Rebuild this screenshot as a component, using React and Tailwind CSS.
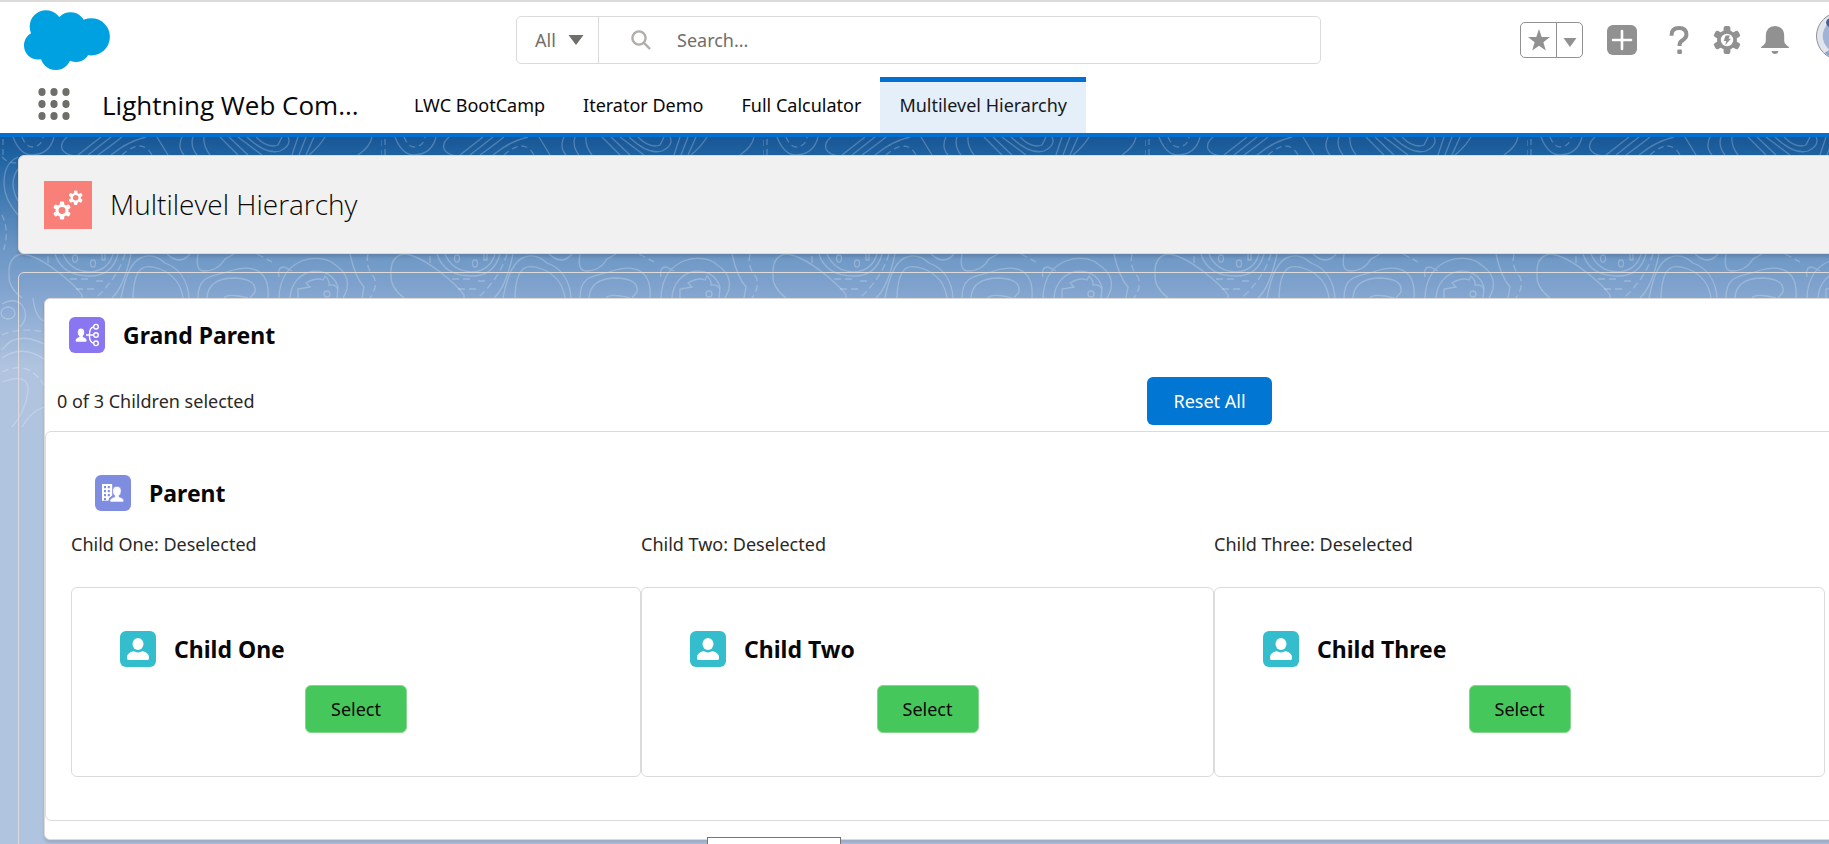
import React from 'react';

const CHILDREN = ['Child One', 'Child Two', 'Child Three'];
const TABS = ['LWC BootCamp', 'Iterator Demo', 'Full Calculator', 'Multilevel Hierarchy'];

function CloudLogo() {
  return (
    <svg viewBox="0 0 86 60" className="h-[60px] w-[86px]" fill="#00a1e0" role="img" aria-label="Salesforce">
      <circle cx="22" cy="16.5" r="16.3" />
      <circle cx="46.5" cy="17.5" r="15.3" />
      <circle cx="67.3" cy="26.8" r="18.6" />
      <circle cx="14" cy="35.5" r="14" />
      <circle cx="31.8" cy="44.5" r="15.5" />
      <circle cx="52" cy="38" r="14" />
      <path d="M10 24 L30 10 L60 16 L66 40 L50 46 L20 46 Z" />
    </svg>
  );
}

function Waffle() {
  const steps = [4, 16, 28];
  return (
    <svg viewBox="0 0 32 32" className="h-8 w-8" fill="#706e6b" aria-hidden="true">
      {steps.map((y) => steps.map((x) => <ellipse key={x + '-' + y} cx={x} cy={y} rx="3.6" ry="4" />))}
    </svg>
  );
}

function Cog({ x, y, r, hole, fill, holeFill }) {
  return (
    <g transform={`translate(${x} ${y}) scale(${r / 14})`}>
      <circle r="10" fill={fill} />
      {[0, 60, 120].map((a) => (
        <rect key={a} x="-3.4" y="-14" width="6.8" height="28" rx="2" fill={fill} transform={`rotate(${a})`} />
      ))}
      <circle r={hole} fill={holeFill} />
    </g>
  );
}

function PersonIcon() {
  return (
    <svg viewBox="0 0 36 36" className="h-9 w-9 rounded-md bg-[#34becd]" fill="#fff" aria-hidden="true">
      <ellipse cx="18" cy="13" rx="5.5" ry="6" />
      <path d="M7 26 Q7 22.3 13 20.3 Q14.2 20 15.2 20.7 Q18 22.3 20.8 20.7 Q21.8 20 23 20.3 Q29 22.3 29 26 V27.4 Q29 29 27.2 29 H8.8 Q7 29 7 27.4 Z" />
    </svg>
  );
}

function HierarchyIcon() {
  return (
    <svg viewBox="0 0 36 36" className="h-9 w-9 rounded-md bg-[#8a76f0]" fill="#fff" aria-hidden="true">
      <ellipse cx="12" cy="15.3" rx="3.2" ry="3.9" />
      <path d="M10.4 18 H13.8 V20 Q17.6 21.2 17.6 23.6 Q17.6 24.8 16.4 24.8 H7.8 Q6.6 24.8 6.6 23.6 Q6.6 21.2 10.4 20 Z" />
      <g fill="none" stroke="#fff" strokeWidth="1.4">
        <circle cx="27" cy="9.7" r="2.3" />
        <circle cx="27" cy="18" r="2.3" />
        <circle cx="27" cy="26.3" r="2.3" />
        <path d="M17 18 H24.6 M24.7 9.7 Q20.4 10.5 20.4 18 Q20.4 25.5 24.7 26.3" />
      </g>
    </svg>
  );
}

function AccountIcon() {
  return (
    <svg viewBox="0 0 36 36" className="h-9 w-9 rounded-md bg-[#7f8de1]" fill="#fff" aria-hidden="true">
      <path d="M7 9 H17.2 V20.4 Q14 22 13.4 25.7 H7 Z" />
      <g fill="#7f8de1">
        {[11, 15, 19].map((y) => (
          <React.Fragment key={y}>
            <rect x="9" y={y} width="2" height="2.2" />
            <rect x="12.8" y={y} width="2" height="2.2" />
          </React.Fragment>
        ))}
        <rect x="9" y="23" width="2" height="2.2" />
      </g>
      <path
        d="M22 11.3 Q26.2 11.6 26.2 16 Q26.2 19.4 24 20.8 V21.8 Q28.8 23.2 28.8 25.8 Q28.8 27 27.6 27 H16 Q14.8 27 14.8 25.8 Q14.8 23.2 19.8 21.8 V20.8 Q17.6 19.4 17.6 16 Q17.6 11.6 22 11.3 Z"
        stroke="#7f8de1"
        strokeWidth="0.6"
      />
    </svg>
  );
}

function Backdrop() {
  return (
    <svg className="absolute inset-x-0 top-0 h-[292px] w-full" aria-hidden="true">
      <defs>
        <pattern id="contours" width="382" height="292" patternUnits="userSpaceOnUse">
          <g fill="none" stroke="#fff" strokeOpacity="0.23" strokeWidth="1.3">
            <path d="M13 0 Q20 18 32 18 Q50 17 54 0 M67 0 Q60 6 62 12 Q65 18 75 19 M78 18 L101 0 M88 18 L111 0 M98 18 Q112 8 122 0 M111 18 Q128 4 146 0" />
            <path d="M157 0 L168 18 M182 0 Q177 10 184 18 M193 0 Q190 9 197 18 M204 0 Q203 9 210 18 M220 0 L238 18 M229 0 L248 18 M238 0 L262 18 M247 0 Q266 18 280 14 Q292 8 288 0 M256 0 Q268 12 278 8 L282 0 M298 0 L292 18 M306 0 L299 18 M314 0 L306 18 M325 0 Q319 10 309 18 M372 0 Q370 10 358 18" />
            <path d="M22 0 Q26 10 32 10 Q42 9 43 0 M3 2 V18 M122 18 Q142 0 152 18 M382 3 V18" strokeDasharray="6 4" />
            <path d="M18 20 Q4 26 4 46 Q4 62 18 78 M18 32 Q8 46 18 64" />
            <path d="M2 20 Q10 28 18 25 M2 78 Q10 95 3 115" strokeDasharray="6 4" />
            <path d="M55 117 Q62 139 90 139 Q112 139 118 117 M63 117 Q70 134 90 135 Q108 134 113 117 M102 117 V123 H105 V117" />
            <ellipse cx="75" cy="121.500" rx="2.5" ry="3.500" />
            <ellipse cx="93" cy="126.500" rx="2.500" ry="3.500" />
            <path d="M22 161 Q8 150 9 138 Q8 119 22 117 Q36 118 58 135 Q76 149 82 158 V161" />
            <path d="M70 142 H92 M96 144 H106 M76 152 H94 M125 117 Q118 140 97 160 M48 119 V128" strokeDasharray="7 4" />
            <path d="M131 117 Q124 150 112 161 M121 161 Q128 124 143 120 Q154 116 165 126 Q187 134 189 161 M133 161 C134 124 148 128 160 132 Q180 140 183 161 M167 117 Q180 129 190 117" />
            <path d="M198 117 Q195 134 204 134 Q218 134 225 122 L234 117 M198 161 C198 136 215 140 230 134 C255 126 270 135 268 161 M207 161 Q208 141 235 141 Q257 142 255 155 L250 161 M224 161 Q228 156 248 161" />
            <path d="M279 161 C280 118 322 116 334 127 C350 137 350 150 343 161 M290 161 C292 130 330 125 338 150 L337 161 M298 161 V152 L310 150 L306 146 Q316 140 323 143 L325 139 Q330 144 329 148 Q338 147 338 155 M279 140 Q277 130 284 130 L292 134 M350 117 Q355 140 364 150 L362 161" />
            <circle cx="327" cy="157" r="3" />
            <path d="M257 117 L272 125 M368 117 Q365 130 374 140 Q378 150 370 161" strokeDasharray="7 4" />
            <ellipse cx="8" cy="176" rx="7" ry="6" />
            <path d="M2 167 Q14 160 22 168 Q30 180 20 190 M33 161 Q35 180 44 184 M2 213 Q16 193 44 207 M2 221 Q22 207 44 222 M2 245 Q30 235 28 255 Q25 275 12 290 M44 270 Q30 275 22 290" />
            <path d="M2 198 Q20 190 44 195 M2 235 Q28 222 44 248" strokeDasharray="7 4" />
          </g>
        </pattern>
      </defs>
      <rect width="100%" height="100%" fill="url(#contours)" />
    </svg>
  );
}

function Header() {
  return (
    <header className="border-t-2 border-b-4 border-t-[#dddbda] border-b-[#0070d2] bg-white">
      <div className="flex h-[75px] items-start pt-2 pr-8 pl-6">
        <div className="w-[492px] shrink-0">
          <CloudLogo />
        </div>
        <form className="mt-1.5 flex h-12 w-[805px] rounded-[5px] border border-[#dddbda] bg-white text-lg text-[#706e6b]">
          <button type="button" className="flex w-[82px] items-center gap-3 border-r border-[#dddbda] pl-[18px]">
            All
            <svg viewBox="0 0 16 10" className="h-2.5 w-4 shrink-0" fill="#706e6b" aria-hidden="true">
              <path d="M0.500 0 H15.500 L8 10 Z" />
            </svg>
          </button>
          <label htmlFor="search" className="flex items-center pl-8">
            <svg viewBox="0 0 20 20" className="h-5 w-5" fill="none" stroke="#b0adab" strokeWidth="2.400" aria-label="Search">
              <circle cx="8" cy="8" r="6.600" />
              <path d="M12.700 12.700 L19 19" />
            </svg>
          </label>
          <input
            id="search"
            type="text"
            placeholder="Search..."
            className="min-w-0 flex-1 bg-transparent pl-[26px] outline-none placeholder:text-[#706e6b]"
          />
        </form>
        <div className="ml-auto flex h-[60px] items-center">
          <div className="mr-6 flex h-9 w-[63px] rounded-[5px] border border-[#919191]">
            <button type="button" aria-label="Favorite" className="flex w-9 items-center justify-center border-r border-[#919191]">
              <svg viewBox="0 0 22 22" className="h-[22px] w-[22px]" fill="#919191">
                <path d="M11 0 L13.700 7.900 L22 8.100 L15.400 13.200 L17.800 21.500 L11 16.700 L4.200 21.500 L6.600 13.200 L0 8.100 L8.300 7.900 Z" />
              </svg>
            </button>
            <button type="button" aria-label="Favorites list" className="flex flex-1 items-center justify-center pt-1">
              <svg viewBox="0 0 14 9" className="h-[9px] w-3.5" fill="#919191">
                <path d="M0.500 0 H13.500 L7 9 Z" />
              </svg>
            </button>
          </div>
          <button type="button" aria-label="Create" className="mr-8">
            <svg viewBox="0 0 30 30" className="h-[30px] w-[30px] rounded-md bg-[#919191]" stroke="#fff" strokeWidth="2.600" strokeLinecap="round">
              <path d="M15 6 V24 M6 15 H24" />
            </svg>
          </button>
          <button type="button" aria-label="Help" className="mr-6">
            <svg viewBox="0 0 20 28" className="h-7 w-5" fill="none" stroke="#919191" strokeWidth="4">
              <path d="M2.600 9.800 V9 Q2.600 2 10.200 2 Q17.400 2 17.400 8.600 Q17.400 11.800 14 14 Q10.600 16 10.600 18.600 V20" />
              <rect x="8.300" y="23.500" width="4.600" height="4.500" rx="1" fill="#919191" stroke="none" />
            </svg>
          </button>
          <button type="button" aria-label="Setup" className="mr-5">
            <svg viewBox="0 0 28 28" className="h-7 w-7">
              <Cog x={14} y={14} r={14} hole={6.2} fill="#919191" holeFill="#fff" />
              <path d="M12.600 9.500 H17 L15.500 12.700 H18 L12.200 19 L13.300 14.900 H10.700 Z" fill="#919191" />
            </svg>
          </button>
          <button type="button" aria-label="Notifications" className="mr-[27px]">
            <svg viewBox="0 0 28 28" className="h-7 w-7" fill="#919191">
              <path d="M14 0 Q23.200 0.500 23.200 10 V15 Q23.200 17.500 25.500 19.300 Q28 20.500 28 21.500 Q28 22 27 22 H1 Q0 22 0 21.500 Q0 20.500 2.500 19.300 Q4.800 17.500 4.800 15 V10 Q4.800 0.500 14 0 Z M10.500 25 H17.500 Q17 28 14 28 Q11 28 10.500 25 Z" />
            </svg>
          </button>
          <button type="button" aria-label="Profile" className="-mt-2">
            <svg viewBox="0 0 48 48" className="h-12 w-12 rounded-full border border-[#919191] bg-[#e1e5ee]">
              <circle cx="24" cy="24" r="18" fill="#a0b3d4" />
              <circle cx="14" cy="10" r="4.500" fill="#3f5f96" />
              <circle cx="34" cy="10" r="4.500" fill="#3f5f96" />
              <ellipse cx="24" cy="26" rx="11.500" ry="10" fill="#3f5f96" />
              <path d="M6 44 Q10 37 24 37 Q38 37 42 44 L24 48 Z" fill="#8ea5cc" />
            </svg>
          </button>
        </div>
      </div>
      <div className="flex h-14 pl-[38px]">
        <button type="button" aria-label="App launcher" className="mt-[11px] h-8 w-8">
          <Waffle />
        </button>
        <div className="w-[325px] shrink-0 pl-8 font-['Open_Sans',sans-serif] text-[26px] leading-[56px] text-[#080707]">
          Lightning Web Com...
        </div>
        <nav className="flex">
          {TABS.map((tab, i) => (
            <a
              key={tab}
              href="#"
              className={
                i === TABS.length - 1
                  ? 'border-t-[5px] border-[#0070d2] bg-[#e5eff9] px-[19px] text-lg leading-[46px] text-[#16191d]'
                  : 'border-t-[5px] border-transparent px-[19px] text-lg leading-[46px] text-[#080707]'
              }
            >
              {tab}
            </a>
          ))}
        </nav>
      </div>
    </header>
  );
}

function ChildCard({ name }) {
  return (
    <section>
      <p className="leading-7">{name}: Deselected</p>
      <div className="mt-[29px] h-[190px] rounded-[6px] border border-[#dddbda] pt-[43px]">
        <h3 className="flex items-center gap-[18px] pl-12 text-[23px] leading-9 font-bold text-[#080707]">
          <PersonIcon />
          {name}
        </h3>
        <div className="mt-[18px] flex justify-center">
          <button
            type="button"
            className="h-12 w-[102px] rounded-[6px] border border-[#84d68c] bg-[#46c75b] text-lg text-[#080707]"
          >
            Select
          </button>
        </div>
      </div>
    </section>
  );
}

export default function App() {
  return (
    <div className="relative h-screen overflow-hidden bg-[#b0c4df] font-['Noto_Sans','Open_Sans',sans-serif] text-lg text-[#2b2826]">
      <div className="-mr-[67px] flex h-full flex-col">
        <Header />
        <main className="relative flex-1 bg-[linear-gradient(to_bottom,#195695_0px,#1f63a3_20px,#6a95c4_110px,#88a8d1_165px,#b0c4df_230px)] px-[18px] pt-[18px]">
          <Backdrop />
          <div className="relative flex h-[99px] items-center gap-[18px] rounded-[6px] border border-[#dddbda] bg-[#f2f1f1] pl-[25px] shadow-[0_3px_3px_rgba(0,0,0,0.12)]">
            <svg viewBox="0 0 48 48" className="h-12 w-12 bg-[#f88078]" aria-hidden="true">
              <Cog x={18} y={29.5} r={9} hole={5.4} fill="#fff" holeFill="#f88078" />
              <Cog x={31.7} y={16.800} r={7.200} hole={5.400} fill="#fff" holeFill="#f88078" />
            </svg>
            <h1 className="font-['Open_Sans',sans-serif] text-[28px] font-light text-[#080707]">Multilevel Hierarchy</h1>
          </div>

          <div className="relative mt-[18px] rounded-[6px] border border-[#dddbda] px-[25px] pt-[25px] pb-10">
            <article className="rounded-[6px] border border-[#dddbda] bg-white pb-[18px] shadow-[0_3px_3px_rgba(0,0,0,0.12)]">
              <h2 className="flex items-center gap-[18px] pt-[18px] pl-6 text-[23px] leading-9 font-bold text-[#080707]">
                <HierarchyIcon />
                Grand Parent
              </h2>
              <div className="mt-6 flex h-12 items-center pl-3">
                <p className="w-[1090px]">0 of 3 Children selected</p>
                <button type="button" className="h-12 w-[125px] rounded-[6px] bg-[#0176d3] text-lg text-white">
                  Reset All
                </button>
              </div>
              <div className="mt-1.5 rounded-[6px] border border-[#dddbda] px-[25px] pt-[43px] pb-[43px]">
                <h2 className="flex items-center gap-[18px] pl-6 text-[23px] leading-9 font-bold text-[#080707]">
                  <AccountIcon />
                  Parent
                </h2>
                <div className="mt-[19px] grid grid-cols-[570fr_573fr_611fr]">
                  {CHILDREN.map((name) => (
                    <ChildCard key={name} name={name} />
                  ))}
                </div>
              </div>
            </article>
          </div>
        </main>
      </div>
      <div className="absolute bottom-0 left-[707px] h-[7px] w-[134px] border border-b-0 border-[#767676] bg-white" />
    </div>
  );
}
